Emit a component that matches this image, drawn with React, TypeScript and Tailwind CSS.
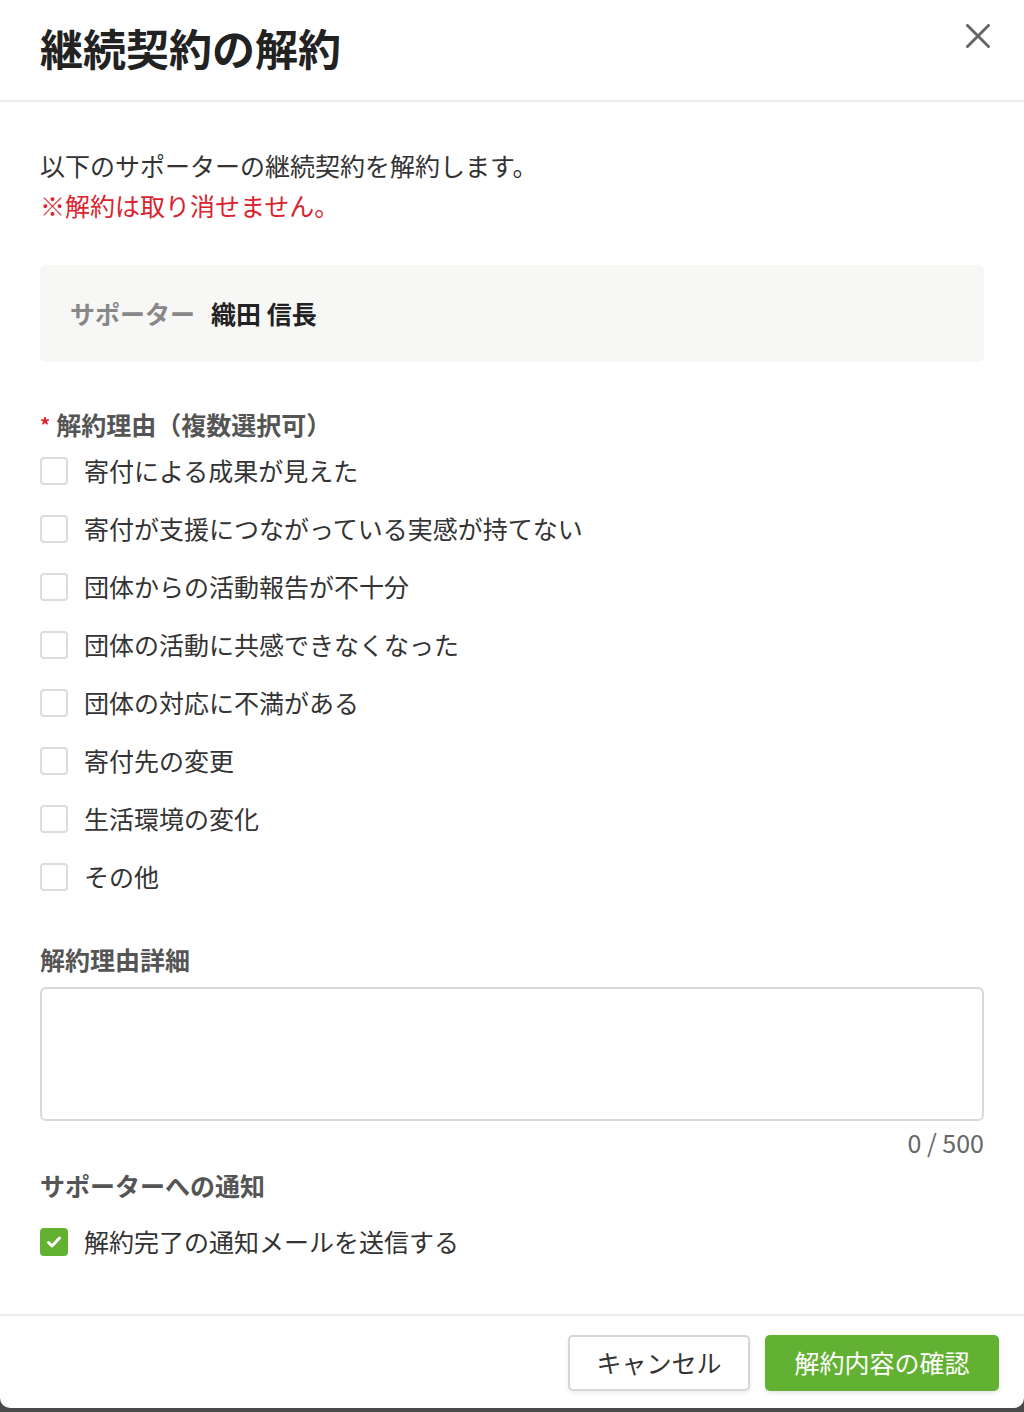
import { useState } from "react";

const reasons = [
  "寄付による成果が見えた",
  "寄付が支援につながっている実感が持てない",
  "団体からの活動報告が不十分",
  "団体の活動に共感できなくなった",
  "団体の対応に不満がある",
  "寄付先の変更",
  "生活環境の変化",
  "その他",
];

function Box({ checked }: { checked: boolean }) {
  if (checked) {
    return (
      <span className="flex h-[28px] w-[28px] shrink-0 items-center justify-center rounded-[4px] bg-[#62b132]">
        <svg width="18" height="18" viewBox="0 0 18 18" fill="none">
          <path d="M3.5 9.5l3.5 3.5 7.5-8" stroke="#fff" strokeWidth="3" strokeLinecap="round" strokeLinejoin="round" />
        </svg>
      </span>
    );
  }
  return <span className="h-[28px] w-[28px] shrink-0 rounded-[4px] border-2 border-[#dcdcdc] bg-white" />;
}

export default function App() {
  const [picked, setPicked] = useState<string[]>([]);
  const [notify, setNotify] = useState(true);
  const [detail, setDetail] = useState("");

  const toggle = (r: string) =>
    setPicked(p => (p.includes(r) ? p.filter(x => x !== r) : [...p, r]));

  return (
    <div className="min-h-[1412px] bg-[#4a4a4a] font-['Noto_Sans_CJK_JP','Noto_Sans',sans-serif]">
      <div className="flex h-[1408px] flex-col rounded-b-[10px] bg-white">
        {/* header */}
        <div className="flex h-[102px] items-start justify-between border-b-2 border-[#ececec] pl-[40px] pr-[34px]">
          <h1 className="mt-[24px] text-[43px] font-bold leading-[46px] text-[#222]">継続契約の解約</h1>
          <button className="mt-[24px]">
            <svg width="24" height="24" viewBox="0 0 24 24" className="block">
              <path d="M1.5 1.5l21 21M22.5 1.5l-21 21" stroke="#666" strokeWidth="3" strokeLinecap="round" />
            </svg>
          </button>
        </div>

        {/* body */}
        <div className="flex-1 px-[40px] pt-[43px] text-[25px] text-[#333]">
          <p className="leading-[40px]">以下のサポーターの継続契約を解約します。</p>
          <p className="leading-[40px] text-[#d9232e]">※解約は取り消せません。</p>

          <div className="mt-[40px] flex h-[97px] items-center gap-[16px] rounded-[6px] bg-[#f7f7f6] px-[30px]">
            <span className="font-bold text-[#888]">サポーター</span>
            <span className="font-bold text-[#222]">織田 信長</span>
          </div>

          <div className="mt-[47px] flex h-[32px] items-center gap-[6px] font-bold text-[#555]">
            <span className="text-[20px] text-[#d9232e]">*</span>
            <span>解約理由（複数選択可）</span>
          </div>
          <div className="mt-[1px]">
            {reasons.map(r => (
              <label key={r} className="flex h-[58px] cursor-pointer items-center gap-[16px]" onClick={() => toggle(r)}>
                <Box checked={picked.includes(r)} />
                <span>{r}</span>
              </label>
            ))}
          </div>

          <div className="mt-[37px] h-[32px] font-bold leading-[32px] text-[#555]">解約理由詳細</div>
          <textarea
            value={detail}
            onChange={e => setDetail(e.target.value.slice(0, 500))}
            className="mt-[12px] block h-[134px] w-full resize-none rounded-[6px] border-2 border-[#d9d9d9] p-[12px] outline-none"
          />
          <div className="mt-[5px] h-[32px] text-right leading-[32px] text-[#666]">{detail.length} / 500</div>

          <div className="mt-[11px] h-[32px] font-bold leading-[32px] text-[#555]">サポーターへの通知</div>
          <label className="mt-[12px] flex h-[58px] cursor-pointer items-center gap-[16px]" onClick={() => setNotify(!notify)}>
            <Box checked={notify} />
            <span>解約完了の通知メールを送信する</span>
          </label>
        </div>

        {/* footer */}
        <div className="flex justify-end gap-[15px] border-t-2 border-[#ececec] pb-[17px] pl-[40px] pr-[25px] pt-[19px]">
          <button className="h-[56px] w-[182px] rounded-[5px] border-2 border-[#d6d6d6] bg-white text-[25px] text-[#333] shadow-[0_2px_4px_rgba(0,0,0,0.08)]">
            キャンセル
          </button>
          <button className="h-[56px] w-[234px] rounded-[5px] bg-[#63b132] text-[25px] text-white shadow-[0_2px_4px_rgba(0,0,0,0.1)]">
            解約内容の確認
          </button>
        </div>
      </div>
    </div>
  );
}
